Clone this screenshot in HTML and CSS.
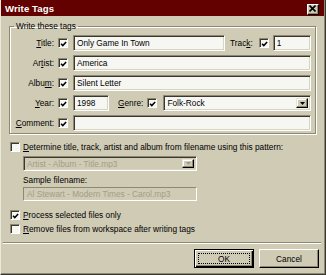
FILE: index.html
```html
<!DOCTYPE html>
<html>
<head>
<meta charset="utf-8">
<link rel="stylesheet" href="styles.css">
</head>
<body>
<div class="window">
  <div class="titlebar">
    <span class="title">Write Tags</span>
    <span class="close"><svg width="7" height="7" viewBox="0 0 7 7"><path d="M0.5 0.5 L6.5 6.5 M6.5 0.5 L0.5 6.5" stroke="#000" stroke-width="1.6"/></svg></span>
  </div>
  <div class="content">
    <fieldset class="group">
      <legend>Write these tags</legend>
      <div class="row">
        <span class="lbl"><u>T</u>itle:</span>
        <span class="cb on"><svg width="8" height="8" viewBox="0 0 8 8"><path d="M1.2 3.6 L3.2 5.8 L7 1.6" fill="none" stroke="#000" stroke-width="1.7"/></svg></span>
        <span class="field w-title">Only Game In Town</span>
        <span class="lbl2 track">Trac<u>k</u>:</span>
        <span class="cb on"><svg width="8" height="8" viewBox="0 0 8 8"><path d="M1.2 3.6 L3.2 5.8 L7 1.6" fill="none" stroke="#000" stroke-width="1.7"/></svg></span>
        <span class="field grow track-in">1</span>
      </div>
      <div class="row">
        <span class="lbl">Ar<u>t</u>ist:</span>
        <span class="cb on"><svg width="8" height="8" viewBox="0 0 8 8"><path d="M1.2 3.6 L3.2 5.8 L7 1.6" fill="none" stroke="#000" stroke-width="1.7"/></svg></span>
        <span class="field grow">America</span>
      </div>
      <div class="row">
        <span class="lbl">Albu<u>m</u>:</span>
        <span class="cb on"><svg width="8" height="8" viewBox="0 0 8 8"><path d="M1.2 3.6 L3.2 5.8 L7 1.6" fill="none" stroke="#000" stroke-width="1.7"/></svg></span>
        <span class="field grow">Silent Letter</span>
      </div>
      <div class="row">
        <span class="lbl"><u>Y</u>ear:</span>
        <span class="cb on"><svg width="8" height="8" viewBox="0 0 8 8"><path d="M1.2 3.6 L3.2 5.8 L7 1.6" fill="none" stroke="#000" stroke-width="1.7"/></svg></span>
        <span class="field w-year">1998</span>
        <span class="lbl2 genre"><u>G</u>enre:</span>
        <span class="cb on"><svg width="8" height="8" viewBox="0 0 8 8"><path d="M1.2 3.6 L3.2 5.8 L7 1.6" fill="none" stroke="#000" stroke-width="1.7"/></svg></span>
        <span class="select grow genre-sel"><span class="sel-text">Folk-Rock</span><span class="drop"><svg width="5" height="3" viewBox="0 0 5 3"><path d="M0 0 H5 L2.5 3 Z" fill="#000"/></svg></span></span>
      </div>
      <div class="row">
        <span class="lbl"><u>C</u>omment:</span>
        <span class="cb on"><svg width="8" height="8" viewBox="0 0 8 8"><path d="M1.2 3.6 L3.2 5.8 L7 1.6" fill="none" stroke="#000" stroke-width="1.7"/></svg></span>
        <span class="field grow"></span>
      </div>
    </fieldset>

    <div class="check-row determine">
      <span class="cb"></span>
      <span class="ctext"><u>D</u>etermine title, track, artist and album from filename using this pattern:</span>
    </div>
    <div class="select disabled pattern"><span class="sel-text">Artist - Album - Title.mp3</span><span class="drop"><svg width="5" height="3" viewBox="0 0 5 3"><path d="M0 0 H5 L2.5 3 Z" fill="#9d9984"/></svg></span></div>
    <div class="sample-lbl">Sample filename:</div>
    <div class="field disabled sample">Al Stewart - Modern Times - Carol.mp3</div>

    <div class="check-row process">
      <span class="cb on"><svg width="8" height="8" viewBox="0 0 8 8"><path d="M1.2 3.6 L3.2 5.8 L7 1.6" fill="none" stroke="#000" stroke-width="1.7"/></svg></span>
      <span class="ctext"><u>P</u>rocess selected files only</span>
    </div>
    <div class="check-row remove">
      <span class="cb"></span>
      <span class="ctext"><u>R</u>emove files from workspace after writing tags</span>
    </div>

    <div class="separator"></div>

    <div class="buttons">
      <span class="btn default"><span class="focus">OK</span></span>
      <span class="btn">Cancel</span>
    </div>
  </div>
</div>
</body>
</html>
```
FILE: styles.css
```css
* { box-sizing: border-box; }
html, body { margin: 0; padding: 0; }
body {
  width: 326px;
  height: 275px;
  overflow: hidden;
  font-family: "Liberation Sans", Arial, sans-serif;
  font-size: 8.3px;
  color: #000;
  background: #cfcbb5;
}
u { text-decoration: underline; text-underline-offset: 1px; }

.window {
  width: 326px;
  height: 275px;
  display: flex;
  flex-direction: column;
  background: #cfcbb5;
  border-left: 1px solid #ece8da;
  border-right: 1px solid #3a382e;
  border-bottom: 1px solid #3a382e;
  box-shadow: inset -1px -1px 0 #8c8874;
}

.titlebar {
  height: 16px;
  background: #630000;
  display: flex;
  align-items: center;
  justify-content: space-between;
  padding: 0 4px 0 4px;
  margin-right: 1px;
}
.title {
  color: #fff;
  font-weight: bold;
  font-size: 9.6px;
  letter-spacing: 0.1px;
}
.close {
  width: 12px;
  height: 11px;
  background: #cfcbb5;
  border-top: 1px solid #fff;
  border-left: 1px solid #fff;
  border-right: 1px solid #000;
  border-bottom: 1px solid #000;
  box-shadow: inset -1px -1px 0 #8c8874;
  display: flex;
  align-items: center;
  justify-content: center;
  margin-top: 2px;
  margin-right: 1px;
}
.close svg { display: block; margin: 0 1px 1px 0; }

.content {
  display: flex;
  flex-direction: column;
  flex: 1;
}

.group {
  margin: 5px 0 0 8px;
  width: 307px;
  padding: 4px 4px 2px 2px;
  border: 1px solid #8c8874;
  box-shadow: 1px 1px 0 #fff, inset 1px 1px 0 #fff;
  display: flex;
  flex-direction: column;
  gap: 4px;
  min-width: 0;
}
.group legend {
  padding: 0 2px;
  margin-left: 2px;
  line-height: 10px;
  font-size: 8.3px;
}

.row {
  display: flex;
  align-items: center;
  height: 16px;
}
.lbl {
  width: 42px;
  text-align: right;
  margin-right: 4px;
  white-space: nowrap;
}
.lbl2 { white-space: nowrap; }
.track { margin-left: 5px; margin-right: 6px; }
.genre { margin-left: 9px; margin-right: 4px; }

.cb {
  width: 10px;
  height: 10px;
  flex: none;
  background: #f6f6f2;
  border-top: 1px solid #8c8874;
  border-left: 1px solid #8c8874;
  border-right: 1px solid #fff;
  border-bottom: 1px solid #fff;
  box-shadow: inset 1px 1px 0 #3a382e;
  display: flex;
  align-items: center;
  justify-content: center;
  margin-right: 5px;
}
.cb svg { display: block; margin: 1px 0 0 1px; }
.track + .cb { margin-right: 4px; }
.genre + .cb { margin-right: 6px; }

.field {
  height: 16px;
  background: #f6f6f2;
  border-top: 1px solid #8c8874;
  border-left: 1px solid #8c8874;
  border-right: 1px solid #fff;
  border-bottom: 1px solid #fff;
  box-shadow: inset 1px 1px 0 #3a382e, inset -1px -1px 0 #d8d4c2;
  padding: 0 3px;
  display: flex;
  align-items: center;
  white-space: nowrap;
  overflow: hidden;
}
.grow { flex: 1; min-width: 0; }
.w-title { width: 152px; flex: none; }
.w-year { width: 36px; flex: none; }

.select {
  height: 16px;
  background: #f6f6f2;
  border-top: 1px solid #8c8874;
  border-left: 1px solid #8c8874;
  border-right: 1px solid #fff;
  border-bottom: 1px solid #fff;
  box-shadow: inset 1px 1px 0 #3a382e, inset -1px -1px 0 #d8d4c2;
  display: flex;
  align-items: stretch;
  padding: 2px 2px 2px 2px;
}
.sel-text {
  flex: 1;
  display: flex;
  align-items: center;
  padding-left: 1px;
  white-space: nowrap;
  overflow: hidden;
}
.drop {
  width: 12px;
  flex: none;
  background: #cfcbb5;
  border-top: 1px solid #e8e4d4;
  border-left: 1px solid #e8e4d4;
  border-right: 1px solid #000;
  border-bottom: 1px solid #000;
  box-shadow: inset -1px -1px 0 #8c8874, inset 1px 1px 0 #fff;
  display: flex;
  align-items: center;
  justify-content: center;
}
.drop svg { display: block; }

.check-row {
  display: flex;
  align-items: center;
  height: 10px;
  margin-left: 9px;
}
.check-row .cb { margin-right: 3px; }
.determine { margin-top: 8px; }
.process { margin-top: 9px; }
.remove { margin-top: 4px; }

.disabled { background: #cfcbb5; color: #a29e88; }
.pattern {
  margin: 4px 0 0 22px;
  width: 174px;
  height: 15px;
}
.sample-lbl {
  margin: 4px 0 0 22px;
  line-height: 10px;
  height: 10px;
}
.sample {
  margin: 2px 0 0 22px;
  width: 174px;
  height: 14px;
  box-shadow: none;
  padding: 0 3px;
}

.separator {
  margin: 8px 4px 0 2px;
  height: 2px;
  border-top: 1px solid #8c8874;
  border-bottom: 1px solid #fff;
}

.buttons {
  display: flex;
  justify-content: flex-end;
  gap: 5px;
  margin: 5px 6px 0 0;
}
.btn {
  width: 60px;
  height: 19px;
  background: #cfcbb5;
  border-top: 1px solid #fff;
  border-left: 1px solid #fff;
  border-right: 1px solid #000;
  border-bottom: 1px solid #000;
  box-shadow: inset -1px -1px 0 #8c8874;
  display: flex;
  align-items: center;
  justify-content: center;
}
.btn.default {
  border: 1px solid #000;
  box-shadow: inset 1px 1px 0 #fff, inset -1px -1px 0 #000, inset -2px -2px 0 #8c8874;
  padding: 3px;
}
.focus {
  flex: 1;
  align-self: stretch;
  display: flex;
  align-items: center;
  justify-content: center;
  border: 1px dotted #000;
}
```
